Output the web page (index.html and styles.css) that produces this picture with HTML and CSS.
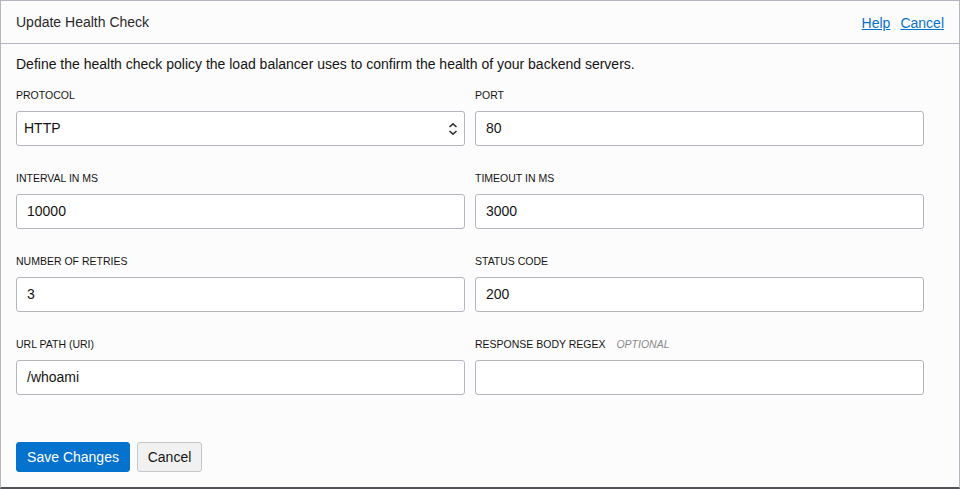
FILE: index.html
```html
<!DOCTYPE html>
<html>
<head>
<meta charset="utf-8">
<link rel="stylesheet" href="styles.css">
</head>
<body>
<div class="dialog">
  <header class="head">
    <h1 class="title">Update Health Check</h1>
    <nav class="links"><a href="#">Help</a><a href="#">Cancel</a></nav>
  </header>
  <main class="content">
    <p class="desc">Define the health check policy the load balancer uses to confirm the health of your backend servers.</p>
    <div class="grid">
      <div class="field">
        <label class="lbl">PROTOCOL</label>
        <div class="input select">HTTP
          <svg class="arrows" width="10" height="14" viewBox="0 0 10 14"><path d="M1.5 5 L5 1.8 L8.5 5" fill="none" stroke="#333" stroke-width="1.6"/><path d="M1.5 9 L5 12.2 L8.5 9" fill="none" stroke="#333" stroke-width="1.6"/></svg>
        </div>
      </div>
      <div class="field">
        <label class="lbl">PORT</label>
        <div class="input">80</div>
      </div>
      <div class="field">
        <label class="lbl">INTERVAL IN MS</label>
        <div class="input">10000</div>
      </div>
      <div class="field">
        <label class="lbl">TIMEOUT IN MS</label>
        <div class="input">3000</div>
      </div>
      <div class="field">
        <label class="lbl">NUMBER OF RETRIES</label>
        <div class="input">3</div>
      </div>
      <div class="field">
        <label class="lbl">STATUS CODE</label>
        <div class="input">200</div>
      </div>
      <div class="field">
        <label class="lbl">URL PATH (URI)</label>
        <div class="input">/whoami</div>
      </div>
      <div class="field">
        <label class="lbl">RESPONSE BODY REGEX <span class="opt">OPTIONAL</span></label>
        <div class="input"></div>
      </div>
    </div>
    <div class="actions">
      <button class="btn primary">Save Changes</button>
      <button class="btn secondary">Cancel</button>
    </div>
  </main>
</div>
</body>
</html>
```

FILE: styles.css
```css
* { box-sizing: border-box; }
html, body { margin: 0; padding: 0; }
body {
  font-family: "Liberation Sans", Arial, sans-serif;
  color: #161513;
  background: #fcfcfd;
  width: 960px;
  height: 489px;
  overflow: hidden;
}
.dialog {
  width: 960px;
  height: 489px;
  border: 1px solid #b4b7bf;
  border-bottom: 2px solid #505257;
  background: #fcfcfd;
}
.head {
  height: 43px;
  border-bottom: 1px solid #b4b7bf;
  display: flex;
  align-items: center;
  justify-content: space-between;
  padding: 0 15px 0 15px;
}
.title {
  margin: 0;
  font-size: 14px;
  font-weight: normal;
  color: #2a2a2a;
  line-height: 16px;
}
.links { display: flex; gap: 10px; padding-top: 1px; }
.links a {
  color: #0572ce;
  font-size: 14px;
  text-decoration: underline;
}
.content { padding: 12px 15px 0 15px; }
.desc {
  margin: 0 0 16px 0;
  font-size: 14px;
  line-height: 17px;
  color: #161513;
}
.grid {
  display: grid;
  grid-template-columns: 449px 449px;
  column-gap: 10px;
  row-gap: 26px;
}
.field { display: flex; flex-direction: column; }
.lbl {
  font-size: 10.5px;
  line-height: 13px;
  color: #161513;
  margin-bottom: 9px;
  height: 13px;
}
.opt {
  font-style: italic;
  color: #8a8a8a;
  margin-left: 8px;
}
.input {
  height: 35px;
  border: 1px solid #b3b6bd;
  border-radius: 3px;
  background: #fff;
  font-size: 14px;
  line-height: 33px;
  padding: 0 10px;
  color: #161513;
  position: relative;
}
.select { padding-left: 7px; }
.arrows { position: absolute; right: 6px; top: 10px; }
.actions {
  display: flex;
  gap: 7px;
  margin-top: 47px;
}
.btn {
  font-family: "Liberation Sans", Arial, sans-serif;
  font-size: 14px;
  height: 30px;
  border-radius: 3px;
  padding: 0 8px;
  cursor: pointer;
}
.primary {
  background: #0572ce;
  color: #fff;
  border: 1px solid #0572ce;
  width: 114px;
}
.secondary {
  background: #f1f1f1;
  color: #161513;
  border: 1px solid #c4c6ca;
  width: 65px;
}
```
